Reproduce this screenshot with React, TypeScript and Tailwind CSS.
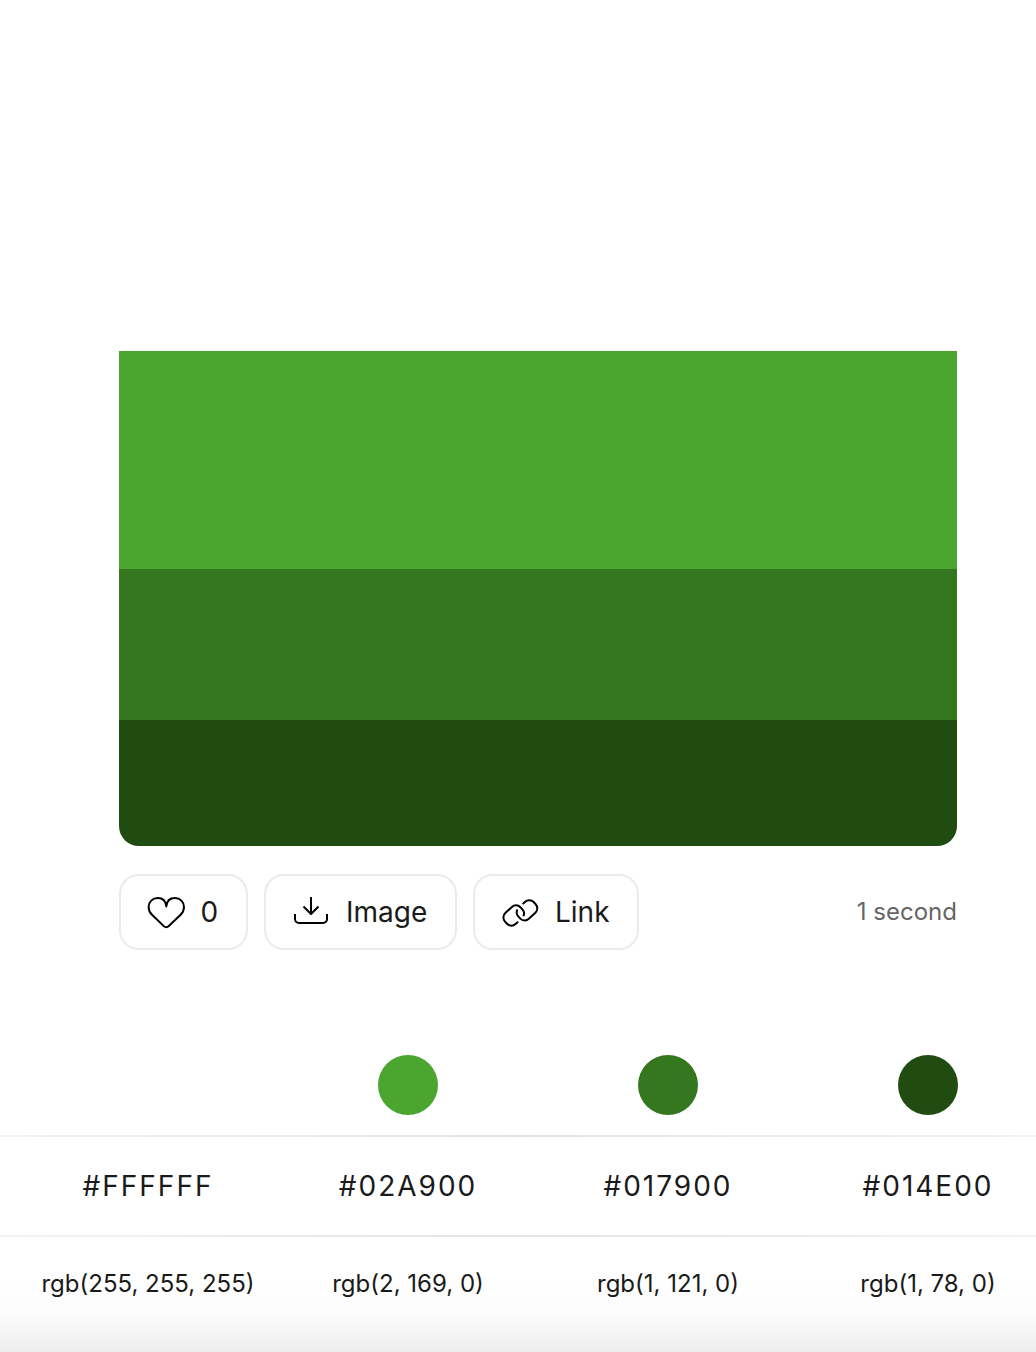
import type { ReactNode } from "react";

type Swatch = { hex: string; rgb: string; dot: string };

const swatches: Swatch[] = [
  { hex: "#FFFFFF", rgb: "rgb(255, 255, 255)", dot: "bg-white" },
  { hex: "#02A900", rgb: "rgb(2, 169, 0)", dot: "bg-[#4ba52e]" },
  { hex: "#017900", rgb: "rgb(1, 121, 0)", dot: "bg-[#35771f]" },
  { hex: "#014E00", rgb: "rgb(1, 78, 0)", dot: "bg-[#204c12]" },
];

function Icon({ children }: { children: ReactNode }) {
  return (
    <svg
      className="size-10 shrink-0"
      viewBox="0 0 40 40"
      fill="none"
      stroke="#000"
      strokeWidth="2"
      strokeLinecap="butt"
      strokeLinejoin="round"
    >
      {children}
    </svg>
  );
}

function HeartIcon() {
  return (
    <Icon>
      <path d="M20.3 14.500C19.800 9 16.500 6 11.800 6C6.400 6 2.600 10 2.600 15C2.600 18.300 3.800 20.600 6 22.800L17.800 34.100C19.300 35.500 21.300 35.500 22.800 34.100L34.600 22.800C36.800 20.600 38 18.300 38 15C38 10 34.200 6 28.800 6C24.100 6 20.800 9 20.300 14.500Z" />
    </Icon>
  );
}

function DownloadIcon() {
  return (
    <Icon>
      <path d="M20 5V22M12.500 14.500L20 22L27.500 14.500" />
      <path d="M4 22V27C4 29.200 5.800 31 8 31H32C34.200 31 36 29.200 36 27V22" />
    </Icon>
  );
}

const chainRing =
  "M-1 7.500H-4.500A6 6 0 0 1 -10.500 1.500V-1.500A6 6 0 0 1 -4.500 -7.500H4.500A6 6 0 0 1 10.500 -1.500V1.500C10.500 4.200 8.900 6.200 6.500 7.100";

function LinkIcon() {
  return (
    <Icon>
      <path d={chainRing} transform="translate(13.700 23.500) rotate(-43)" />
      <path d={chainRing} transform="translate(27 18.300) rotate(137)" />
    </Icon>
  );
}

function ActionButton({ icon, label, className }: { icon: ReactNode; label: string; className: string }) {
  return (
    <button
      className={`flex h-[76px] items-center rounded-[20px] border-2 border-[#ebebeb] bg-white pl-[25px] text-[28px] leading-none ${className}`}
    >
      {icon}
      <span>{label}</span>
    </button>
  );
}

function Rule() {
  return <div className="h-0.5 bg-linear-to-r from-[#f3f3f3] via-[#e4e4e4] to-[#f3f3f3]" />;
}

export default function App() {
  return (
    <main className="h-[1352px] w-[1036px] overflow-hidden bg-white bg-[linear-gradient(to_bottom,#fff_1280px,#fcfcfc_1312px,#eeeeee_1352px)] pt-[351px] font-[Inter,sans-serif] text-[#1a1a1a]">
      <section className="ml-[119px] w-[838px]">
        <div className="overflow-hidden rounded-b-[20px]">
          <div className="h-[218px] bg-[#4ba52e]" />
          <div className="h-[151px] bg-[#35771f]" />
          <div className="h-[126px] bg-[#204c12]" />
        </div>
        <div className="mt-7 flex items-center gap-4">
          <ActionButton icon={<HeartIcon />} label="0" className="w-[129px] gap-[14.500px]" />
          <ActionButton icon={<DownloadIcon />} label="Image" className="w-[193px] gap-[15px]" />
          <ActionButton icon={<LinkIcon />} label="Link" className="w-[166px] gap-[15px]" />
          <span className="ml-auto text-2xl text-[#666]">1 second</span>
        </div>
      </section>

      <section className="mt-[105px]">
        <div className="ml-[18px] grid h-20 w-[1040px] grid-cols-4 justify-items-center">
          {swatches.map((s) => (
            <div key={s.hex} className={`size-[60px] rounded-full ${s.dot}`} />
          ))}
        </div>
        <Rule />
        <div className="ml-[18px] grid h-[98px] w-[1040px] grid-cols-4 items-center text-center text-[28px] tracking-[2px]">
          {swatches.map((s) => (
            <span key={s.hex}>{s.hex}</span>
          ))}
        </div>
        <Rule />
        <div className="ml-[18px] grid h-[94px] w-[1040px] grid-cols-4 items-center text-center text-2xl">
          {swatches.map((s) => (
            <span key={s.hex}>{s.rgb}</span>
          ))}
        </div>
      </section>
    </main>
  );
}
